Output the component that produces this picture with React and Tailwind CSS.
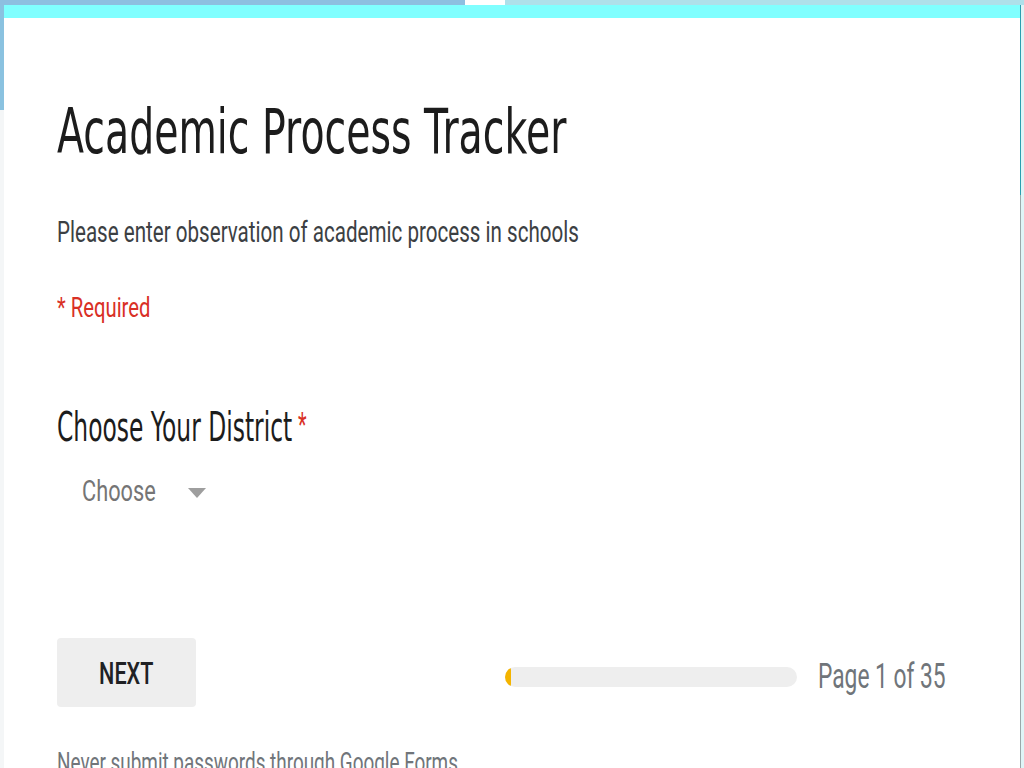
import React from 'react'

const roboto = { fontFamily: 'Roboto, "Liberation Sans", sans-serif' }
const playful = { fontFamily: '"DejaVu Sans", "Liberation Sans", sans-serif' }

function Squeezed({ children, className = '', scale = 'scale-x-[0.7]', style = roboto }) {
  return (
    <div className={`whitespace-nowrap origin-left ${scale} ${className}`} style={style}>
      {children}
    </div>
  )
}

export default function App() {
  return (
    <div className="h-screen w-full overflow-hidden bg-white flex flex-col">
      <div className="h-[5px] flex shrink-0">
        <div className="w-[465px] bg-[#8dbfe0]" />
        <div className="w-[40px] bg-white" />
        <div className="flex-1 bg-[#aee0ea]" />
      </div>

      <div className="flex flex-1 min-h-0">
        <div className="w-[4px] flex flex-col">
          <div className="h-[105px] bg-[#8ac2e0]" />
          <div className="flex-1 bg-[#f4f6f7]" />
        </div>

        <div className="flex-1 flex flex-col">
          <div className="h-[13px] bg-[#80ffff] shrink-0" />

          <div className="flex flex-col pl-[53px] pr-[75px]">
            <Squeezed
              className="mt-[83px] text-[62px] leading-none text-[#1c1c1c]"
              scale="scale-x-[0.636]"
              style={playful}
            >
              Academic Process Tracker
            </Squeezed>

            <Squeezed className="mt-[55px] text-[29px] leading-none text-[#3c4043]" scale="scale-x-[0.71]">
              Please enter observation of academic process in schools
            </Squeezed>

            <Squeezed className="mt-[48px] text-[27px] leading-none text-[#d93025]" scale="scale-x-[0.75]">
              * Required
            </Squeezed>

            <Squeezed
              className="mt-[85px] text-[40px] leading-none text-[#1c1c1c]"
              scale="scale-x-[0.585]"
              style={playful}
            >
              Choose Your District
              <span className="ml-[10px] text-[#d93025] text-[34px] align-top" style={roboto}>*</span>
            </Squeezed>

            <div className="mt-[30px] ml-[25px] flex items-center">
              <div className="w-[74px]">
                <Squeezed className="text-[29px] leading-none text-[#757575]" scale="scale-x-[0.75]">
                  Choose
                </Squeezed>
              </div>
              <svg className="ml-[32px] mt-[2px]" width="18" height="10" viewBox="0 0 18 10">
                <path d="M0 0 L18 0 L9 10 Z" fill="#9e9e9e" />
              </svg>
            </div>

            <div className="mt-[132px] flex items-center justify-between">
              <button className="w-[139px] h-[69px] rounded-[4px] bg-[#eeeeee] flex items-center justify-center">
                <span
                  className="inline-block scale-x-[0.675] text-[32px] font-medium leading-none text-[#202124]"
                  style={roboto}
                >
                  NEXT
                </span>
              </button>

              <div className="mt-[8px] flex items-center gap-[21px]">
                <div className="w-[292px] h-[20px] rounded-full bg-[#eeeeee] overflow-hidden flex">
                  <div className="w-[6px] h-full rounded-full bg-[#f4b400]" />
                </div>
                <div className="w-[127px]">
                  <Squeezed className="text-[35px] leading-none text-[#70757a]" scale="scale-x-[0.65]">
                    Page 1 of 35
                  </Squeezed>
                </div>
              </div>
            </div>

            <Squeezed className="mt-[43px] text-[27px] leading-none text-[#70757a]" scale="scale-x-[0.7]">
              Never submit passwords through Google Forms.
            </Squeezed>
          </div>
        </div>

        <div className="w-[1px] flex flex-col">
          <div className="h-[190px] bg-[#2a9fb0]" />
          <div className="flex-1 bg-[#9aa8aa]" />
        </div>
        <div className="w-[3px] bg-[#dff5f7]" />
      </div>
    </div>
  )
}
